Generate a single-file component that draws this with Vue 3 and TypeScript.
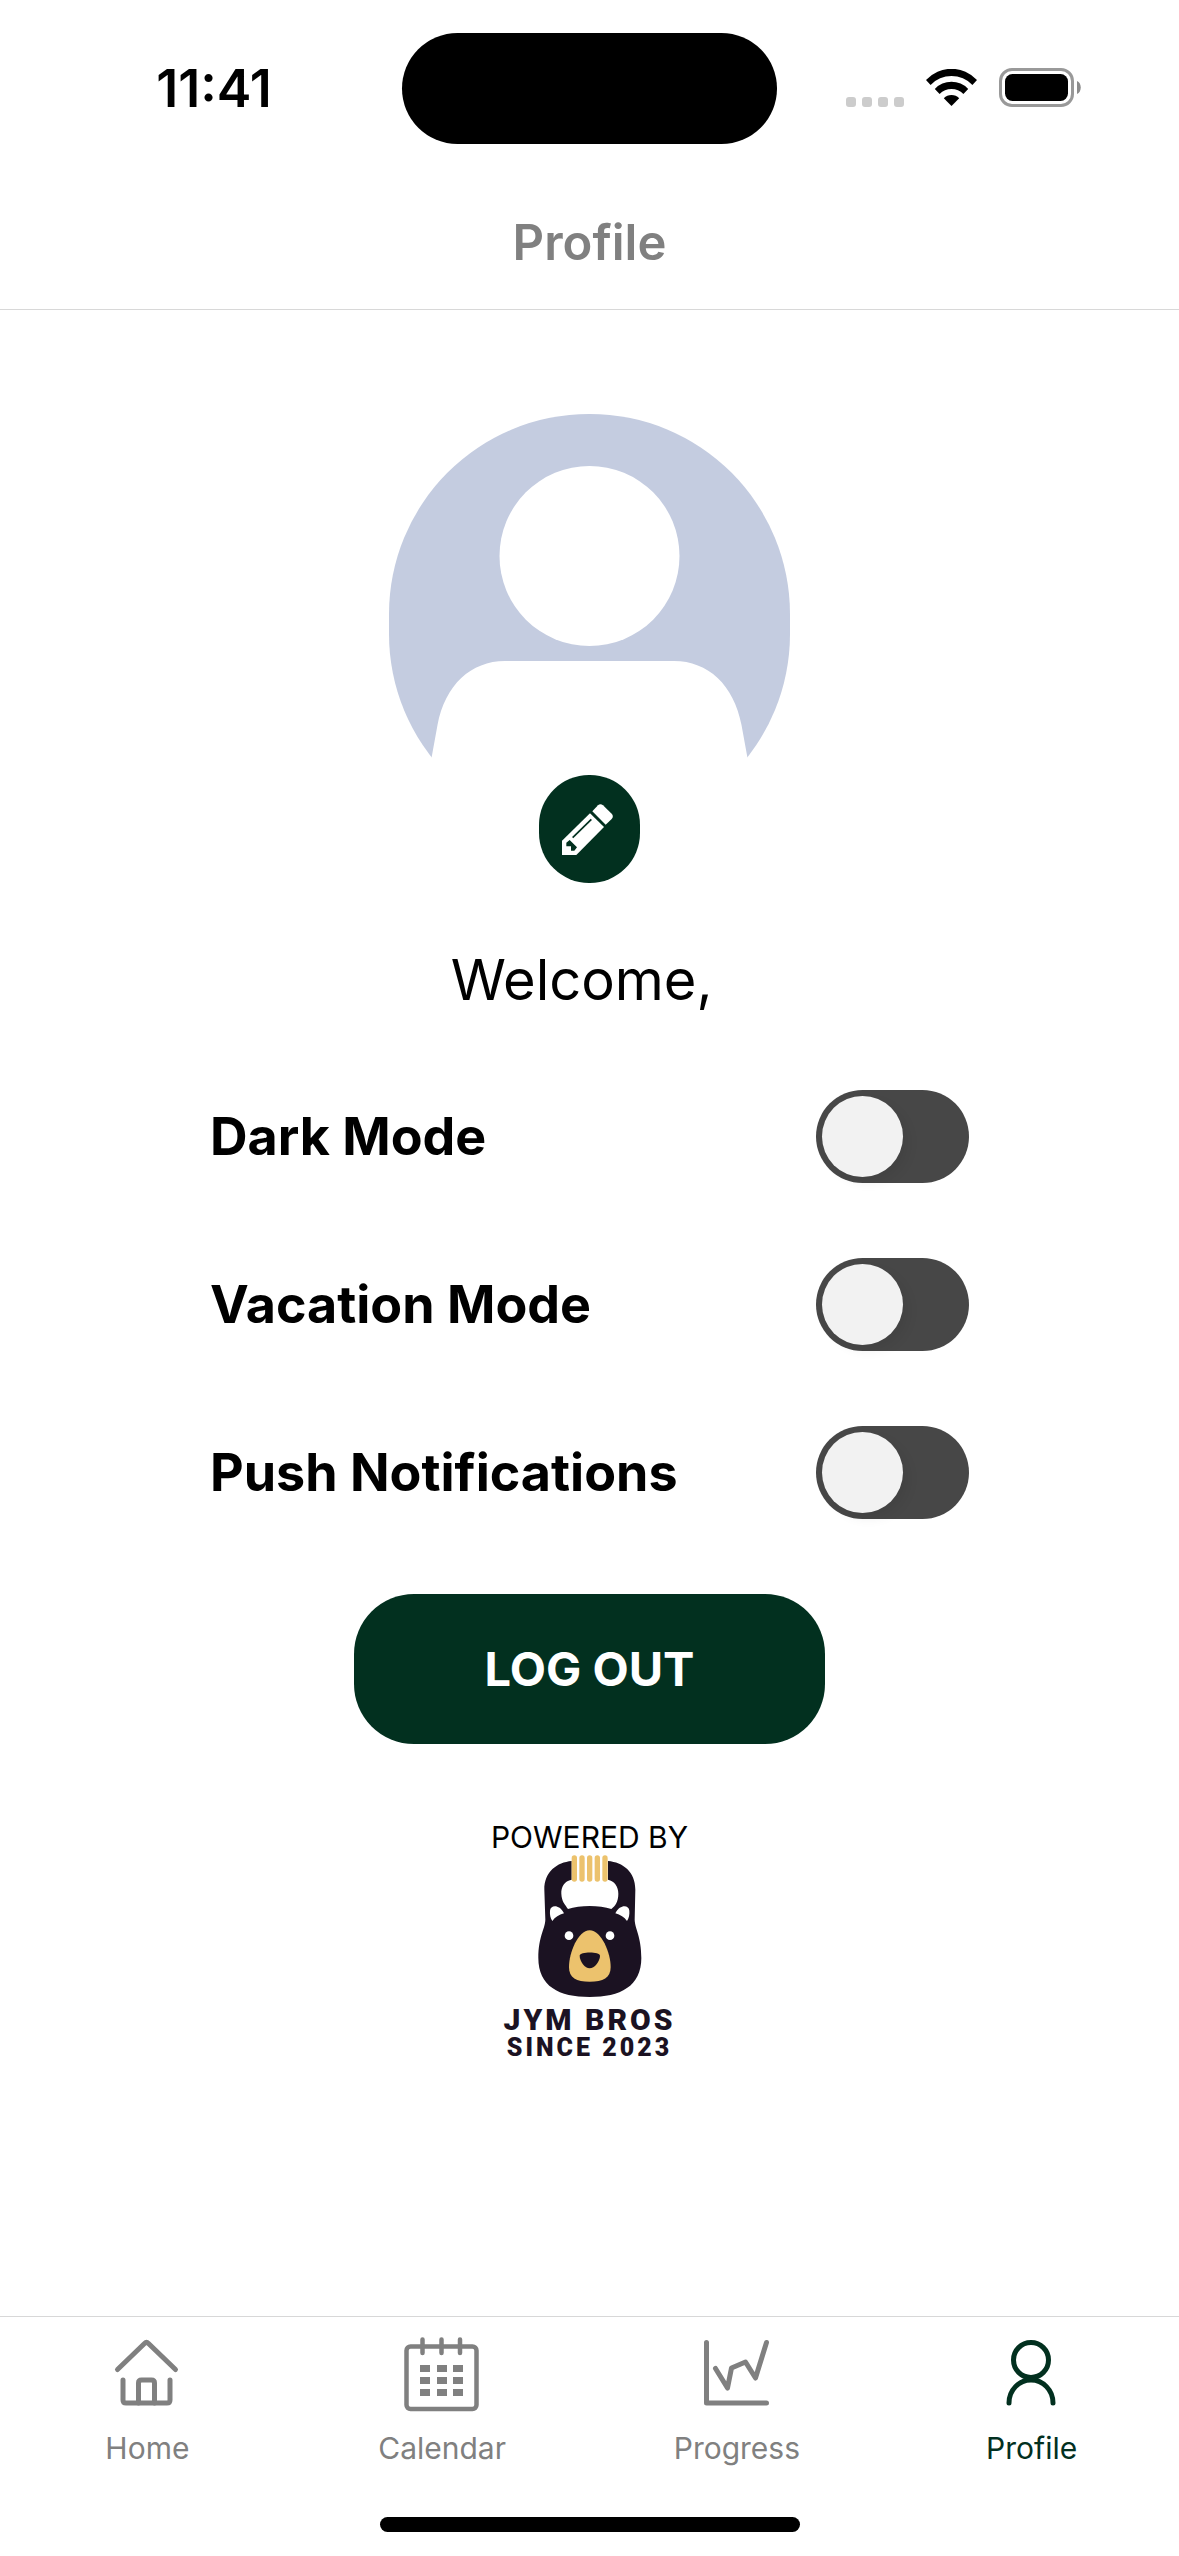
<script setup lang="ts">
import { ref } from 'vue'

interface Setting {
  id: string
  label: string
  on: boolean
}

interface Tab {
  name: string
  active: boolean
}

const settings = ref<Setting[]>([
  { id: 'dark-mode', label: 'Dark Mode', on: false },
  { id: 'vacation-mode', label: 'Vacation Mode', on: false },
  { id: 'push-notifications', label: 'Push Notifications', on: false },
])

const tabs: Tab[] = [
  { name: 'Home', active: false },
  { name: 'Calendar', active: false },
  { name: 'Progress', active: false },
  { name: 'Profile', active: true },
]

const columns = [16, 33, 49]
const rows = [29, 41, 53]
const grips = [314, 337, 360, 383, 406]
</script>

<template>
  <div class="screen">
    <div class="status">
      <span class="time">11:41</span>
      <div class="island"></div>
      <div class="indicators">
        <div class="signal"><i v-for="n in 4" :key="n"></i></div>
        <svg class="wifi" viewBox="0 0 51 37" aria-hidden="true">
          <path d="M0 11A34.6 34.6 0 0 1 51 11L46.4 15.9A29 29 0 0 0 4.6 15.9Z" />
          <path d="M8.8 19.9A23 23 0 0 1 42.2 19.9L37.4 24.9A17 17 0 0 0 13.6 24.9Z" />
          <path d="M17.8 29.2A11 11 0 0 1 33.2 29.2L25.5 37Z" />
        </svg>
        <svg class="battery" viewBox="0 0 82 39" aria-hidden="true">
          <rect x="1.5" y="1.5" width="72" height="36" rx="11.5" fill="none" stroke="#999" stroke-width="3" />
          <rect x="6" y="6" width="63" height="27" rx="7.5" fill="#000" />
          <path d="M78 13c5 2 5 11 0 13z" fill="#8c8c8c" />
        </svg>
      </div>
    </div>

    <header class="header">
      <h1>Profile</h1>
    </header>

    <main class="content">
      <svg class="avatar" viewBox="0 0 401 420" role="img" aria-label="Profile picture">
        <rect width="401" height="420" rx="200" fill="#c4cce0" />
        <circle cx="200.5" cy="142" r="90" fill="#fff" />
        <path
          d="M0 420V344H42.5L48.5 311C56 271 82 247 116 247H285C319 247 345 271 352.5 311L358.5 344H401V420Z"
          fill="#fff"
        />
      </svg>
      <button class="edit" type="button" aria-label="Edit picture">
        <svg viewBox="579 1210 156 156" aria-hidden="true">
          <path d="M670 1235L687 1217Q694 1210 702 1217L728 1242Q735 1250 728 1258L710 1275Z" fill="#fff" />
          <path d="M663 1241L705 1282L622 1366H579V1323Z" fill="#fff" />
          <path d="M611 1314L667 1259" stroke="#02301f" stroke-width="5" />
          <path d="M592 1329L602 1321L624 1343L616 1353H606V1340H592Z" fill="#02301f" />
        </svg>
      </button>

      <p class="welcome">Welcome,&nbsp;</p>

      <div class="settings">
        <div v-for="item in settings" :key="item.id" class="setting">
          <label :for="item.id">{{ item.label }}</label>
          <input :id="item.id" v-model="item.on" type="checkbox" role="switch" />
        </div>
      </div>

      <button class="logout" type="button">LOG OUT</button>

      <div class="brand">
        <span class="powered">POWERED BY</span>
        <svg class="bear" viewBox="199 136 321 429" aria-hidden="true">
          <path
            d="M306 154C262 158 224 186 224 240L227 330C226 358 206 380 206 445C206 530 268 562 360 562C452 562 515 530 515 445C515 380 496 358 495 330L497 240C497 186 460 158 415 154Z"
            fill="#1b1222"
          />
          <path
            d="M306 210C284 214 274 232 275 252C276 276 286 284 295 298C330 286 390 286 425 298C437 288 446 276 446 252C446 230 434 214 415 210V136H306Z"
            fill="#fff"
          />
          <path
            v-for="n in grips"
            :key="n"
            :d="`M${n} 145V208`"
            stroke="#ecc26d"
            stroke-width="16"
            stroke-linecap="round"
          />
          <path d="M241 303C242 287 268 282 283 311C268 315 256 323 248 334C242 326 240 314 241 303Z" fill="#fff" />
          <path d="M479 303C478 287 452 282 437 311C452 315 464 323 472 334C478 326 480 314 479 303Z" fill="#fff" />
          <circle cx="298" cy="378" r="13" fill="#fff" />
          <circle cx="421" cy="378" r="13" fill="#fff" />
          <path
            d="M360 362C395 362 423 430 423 472C423 505 400 516 360 516C320 516 298 505 298 472C298 430 325 362 360 362Z"
            fill="#ecc26d"
          />
          <path d="M330 438C330 425 391 425 391 438C391 455 374 476 360 476C346 476 330 455 330 438Z" fill="#1b1222" />
        </svg>
        <strong class="brand-name">JYM BROS</strong>
        <strong class="brand-since">SINCE 2023</strong>
      </div>
    </main>

    <nav class="tabs">
      <a v-for="tab in tabs" :key="tab.name" href="#" class="tab" :class="{ active: tab.active }">
        <svg viewBox="0 0 76 76" aria-hidden="true">
          <template v-if="tab.name === 'Home'">
            <path d="M8.5 33.5L35.5 7.5Q37.5 5.5 39.5 7.5L66.5 33.5" />
            <path d="M14 44V64Q14 67 17 67H58Q61 67 61 64V44" />
            <path d="M29.5 67V47Q29.5 44 32.5 44H42.5Q45.5 44 45.5 47V67" />
          </template>
          <template v-else-if="tab.name === 'Calendar'">
            <rect x="2.5" y="10.5" width="70" height="62.5" rx="4" stroke-width="4.5" />
            <path d="M18.5 3.5V17M37.5 3.5V17M56 3.5V17" stroke-width="4.5" />
            <template v-for="y in rows" :key="y">
              <rect v-for="x in columns" :key="x" class="cell" :x="x" :y="y" width="10" height="7" />
            </template>
          </template>
          <template v-else-if="tab.name === 'Progress'">
            <path d="M7.5 6.5V67H67.5" />
            <path d="M16.5 32.5L28.5 52L32.5 32L46.5 26L56.5 42L67.5 6.5" />
          </template>
          <template v-else>
            <circle cx="37" cy="24" r="17.5" />
            <path d="M15 67C15 54 25 44 37 44S59 54 59 67" />
          </template>
        </svg>
        <span>{{ tab.name }}</span>
      </a>
    </nav>
    <div class="home-indicator"></div>
  </div>
</template>

<style>
body {
  background: #fff;
}
</style>

<style scoped>
.screen {
  display: flex;
  flex-direction: column;
  min-height: 100vh;
  color: #000;
  font-family: Inter, "Liberation Sans", sans-serif;
}

.status {
  display: grid;
  grid-template-columns: 1fr 375px 1fr;
  align-items: center;
  padding: 33px 0;
}

.time {
  padding-left: 26px;
  text-align: center;
  font-size: 52px;
  line-height: 60px;
  font-weight: 600;
}

.island {
  height: 111px;
  border-radius: 56px;
  background: #000;
}

.indicators {
  display: flex;
  align-items: center;
  justify-content: flex-end;
  gap: 22px;
  padding: 0 98px 2px 0;
}

.signal {
  display: flex;
  align-self: flex-end;
  gap: 6px;
}

.signal i {
  width: 10px;
  height: 10px;
  border-radius: 3px;
  background: #ccc;
}

.wifi {
  width: 51px;
  height: 37px;
}

.battery {
  width: 82px;
  height: 39px;
}

.header {
  border-bottom: 1px solid #d8d8d8;
}

.header h1 {
  margin: 0;
  color: #808080;
  text-align: center;
  font-size: 49px;
  line-height: 132px;
  font-weight: 600;
}

.content {
  display: flex;
  flex: 1;
  flex-direction: column;
  align-items: center;
  padding-top: 104px;
}

.avatar {
  width: 401px;
  height: 420px;
}

.edit {
  position: relative;
  display: flex;
  align-items: center;
  justify-content: center;
  width: 101px;
  height: 108px;
  margin-top: -59px;
  padding: 0 3px 0 0;
  border: 0;
  border-radius: 50px;
  background: #02301f;
}

.edit svg {
  width: 52px;
  height: 52px;
}

.welcome {
  margin: 61px 0 74px;
  font-size: 56px;
  line-height: 72px;
}

.settings {
  display: flex;
  flex-direction: column;
  align-self: stretch;
  gap: 75px;
  padding: 0 210px;
}

.setting {
  display: flex;
  align-items: center;
  justify-content: space-between;
}

.setting label {
  font-size: 52px;
  line-height: 62px;
  font-weight: 700;
}

.setting input {
  appearance: none;
  width: 153px;
  height: 93px;
  margin: 0;
  padding: 6px;
  border-radius: 47px;
  background: #474747;
}

.setting input::before {
  content: "";
  display: block;
  width: 81px;
  height: 81px;
  border-radius: 50%;
  background: #f2f2f2;
  box-shadow: 6px 6px 12px rgba(0, 0, 0, 0.06);
}

.setting input:checked::before {
  margin-left: auto;
}

.logout {
  width: 40%;
  height: 150px;
  margin: 75px 0;
  padding: 0 0 2px;
  border: 0;
  border-radius: 60px;
  background: #02301f;
  color: #fff;
  font-family: inherit;
  font-size: 47px;
  font-weight: 700;
}

.brand {
  display: flex;
  flex-direction: column;
  align-items: center;
  color: #1b1222;
}

.powered {
  color: #000;
  font-size: 30px;
  line-height: 36px;
}

.bear {
  width: 107px;
  height: 143px;
}

.brand-name {
  margin-top: 7px;
  font-family: Roboto, "Liberation Sans", sans-serif;
  font-size: 30px;
  line-height: 30px;
  font-weight: 900;
  letter-spacing: 3px;
}

.brand-since {
  font-family: Roboto, "Liberation Sans", sans-serif;
  font-size: 25px;
  line-height: 26px;
  font-weight: 900;
  letter-spacing: 3px;
}

.tabs {
  display: flex;
  padding: 19px 0 51px;
  border-top: 1px solid #d8d8d8;
}

.tab {
  display: flex;
  flex: 1;
  flex-direction: column;
  align-items: center;
  gap: 18px;
  color: #808080;
  font-size: 30px;
  line-height: 36px;
  text-decoration: none;
}

.tab.active {
  color: #02301f;
}

.tab svg {
  width: 76px;
  height: 76px;
  fill: none;
  stroke: currentColor;
  stroke-width: 5;
  stroke-linecap: round;
  stroke-linejoin: round;
}

.tab .cell {
  fill: currentColor;
  stroke: none;
}

.home-indicator {
  align-self: center;
  width: 420px;
  height: 15px;
  margin-bottom: 24px;
  border-radius: 8px;
  background: #000;
}
</style>
